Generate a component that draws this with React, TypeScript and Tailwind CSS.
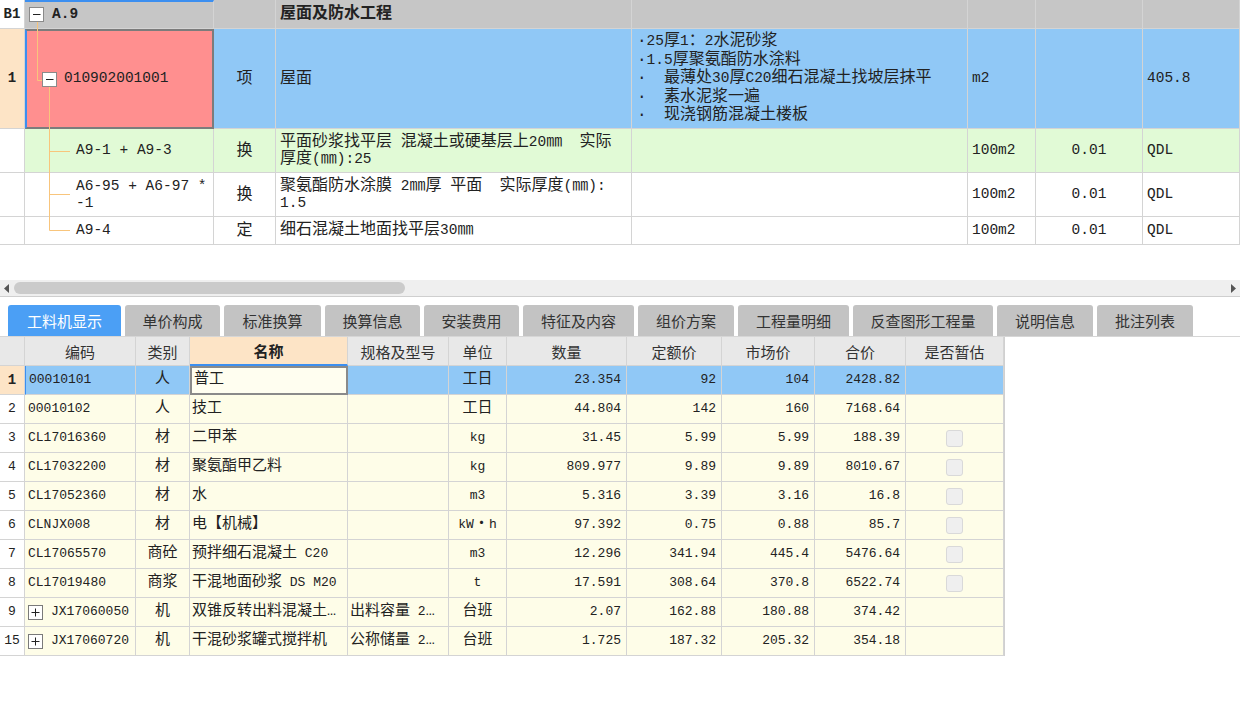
import React from "react";

// splits text so that ASCII runs can get their own (narrower) size
function Mix({ t, a }: { t: string; a: string }) {
  const parts = t.match(/[\x20-\x7e]+|[^\x20-\x7e]+/g) ?? [];
  return (
    <>
      {parts.map((p, i) =>
        /^[\x20-\x7e]/.test(p) ? (
          <span key={i} className={a}>
            {p}
          </span>
        ) : (
          <span key={i}>{p}</span>
        )
      )}
    </>
  );
}

const line = "shrink-0 border-r border-b border-[#d4d4d4] flex items-center";
const T = "text-[14.5px]";
const S = "text-[13px]";

const TreeLines = () => (
  <svg
    className="absolute left-0 top-0 pointer-events-none"
    width="214"
    height="245"
    viewBox="0 0 214 245"
  >
    <g stroke="#f8c57c" strokeWidth="1" fill="none">
      <path d="M37.5 22 V80.5 H42" />
      <path d="M49.5 87 V230.5 H70" />
      <path d="M49.5 151.5 H70" />
      <path d="M49.5 194.5 H70" />
    </g>
    <rect x="29.5" y="7.5" width="14" height="14" fill="#fff" stroke="#8a8a8a" />
    <path d="M33 14.5 H40.5" stroke="#222" />
    <rect x="42.5" y="72.5" width="14" height="14" fill="#fff" stroke="#8a8a8a" />
    <path d="M46 79.5 H53.5" stroke="#222" />
  </svg>
);

const tabs = [
  { name: "工料机显示", w: "w-[113px]" },
  { name: "单价构成", w: "w-[95px]" },
  { name: "标准换算", w: "w-[97px]" },
  { name: "换算信息", w: "w-[95px]" },
  { name: "安装费用", w: "w-[95px]" },
  { name: "特征及内容", w: "w-[111px]" },
  { name: "组价方案", w: "w-[96px]" },
  { name: "工程量明细", w: "w-[111px]" },
  { name: "反查图形工程量", w: "w-[140px]" },
  { name: "说明信息", w: "w-[96px]" },
  { name: "批注列表", w: "w-[96px]" },
];

interface Res {
  n: string;
  code: string;
  type: string;
  name: string;
  spec?: string;
  unit: string;
  qty: string;
  p1: string;
  p2: string;
  total: string;
  cb?: boolean;
  plus?: boolean;
}

const rows: Res[] = [
  { n: "1", code: "00010101", type: "人", name: "普工", unit: "工日", qty: "23.354", p1: "92", p2: "104", total: "2428.82" },
  { n: "2", code: "00010102", type: "人", name: "技工", unit: "工日", qty: "44.804", p1: "142", p2: "160", total: "7168.64" },
  { n: "3", code: "CL17016360", type: "材", name: "二甲苯", unit: "kg", qty: "31.45", p1: "5.99", p2: "5.99", total: "188.39", cb: true },
  { n: "4", code: "CL17032200", type: "材", name: "聚氨酯甲乙料", unit: "kg", qty: "809.977", p1: "9.89", p2: "9.89", total: "8010.67", cb: true },
  { n: "5", code: "CL17052360", type: "材", name: "水", unit: "m3", qty: "5.316", p1: "3.39", p2: "3.16", total: "16.8", cb: true },
  { n: "6", code: "CLNJX008", type: "材", name: "电【机械】", unit: "kW・h", qty: "97.392", p1: "0.75", p2: "0.88", total: "85.7", cb: true },
  { n: "7", code: "CL17065570", type: "商砼", name: "预拌细石混凝土 C20", unit: "m3", qty: "12.296", p1: "341.94", p2: "445.4", total: "5476.64", cb: true },
  { n: "8", code: "CL17019480", type: "商浆", name: "干混地面砂浆 DS M20", unit: "t", qty: "17.591", p1: "308.64", p2: "370.8", total: "6522.74", cb: true },
  { n: "9", code: "JX17060050", type: "机", name: "双锥反转出料混凝土…", spec: "出料容量 2…", unit: "台班", qty: "2.07", p1: "162.88", p2: "180.88", total: "374.42", plus: true },
  { n: "15", code: "JX17060720", type: "机", name: "干混砂浆罐式搅拌机", spec: "公称储量 2…", unit: "台班", qty: "1.725", p1: "187.32", p2: "205.32", total: "354.18", plus: true },
];

const PlusBox = () => (
  <span className="w-[15px] h-[15px] shrink-0 border border-[#7a7a7a] bg-white flex items-center justify-center">
    <svg width="9" height="9" viewBox="0 0 9 9">
      <path d="M0.5 4.5 H8.5 M4.5 0.5 V8.5" stroke="#222" strokeWidth="1" />
    </svg>
  </span>
);

function SubRow({
  h,
  bg,
  code,
  kind,
  name,
}: {
  h: string;
  bg: string;
  code: React.ReactNode;
  kind: string;
  name: React.ReactNode;
}) {
  return (
    <div className={`flex ${h}`}>
      <div className={`${line} w-[25px] bg-white`} />
      <div className={`${line} w-[189px] ${bg} pl-[51px] leading-[17px] ${T}`}>{code}</div>
      <div className={`${line} w-[62px] ${bg} justify-center`}>{kind}</div>
      <div className={`${line} w-[356px] ${bg} pl-[4px] leading-[17px] whitespace-pre`}>
        <div>{name}</div>
      </div>
      <div className={`${line} w-[336px] ${bg}`} />
      <div className={`${line} w-[68px] ${bg} pl-[4px] ${T}`}>100m2</div>
      <div className={`${line} w-[107px] ${bg} justify-center ${T}`}>0.01</div>
      <div className={`${line} w-[97px] ${bg} pl-[4px] ${T}`}>QDL</div>
    </div>
  );
}

export default function App() {
  const features = [
    "·25厚1：2水泥砂浆",
    "·1.5厚聚氨酯防水涂料",
    "·  最薄处30厚C20细石混凝土找坡层抹平",
    "·  素水泥浆一遍",
    "·  现浇钢筋混凝土楼板",
  ];

  return (
    <div className="w-[1240px] h-[704px] bg-white overflow-hidden text-[#222] font-['Liberation_Mono','Noto_Sans_CJK_SC',monospace]">
      {/* upper grid */}
      <div className="relative text-[16px]">
        <div className="flex h-[29px] bg-[#c6c6c6]">
          <div className={`${line} w-[25px] bg-white justify-center font-bold text-[14px]`}>B1</div>
          <div className={`${line} w-[189px] border-t-2 border-t-[#3c8ff0] pl-[27px] font-bold ${T}`}>A.9</div>
          <div className={`${line} w-[62px]`} />
          <div className={`${line} w-[356px] pl-[4px] font-bold`}>屋面及防水工程</div>
          <div className={`${line} w-[336px]`} />
          <div className={`${line} w-[68px]`} />
          <div className={`${line} w-[107px]`} />
          <div className={`${line} w-[97px]`} />
        </div>

        <div className="flex h-[100px] bg-[#90c8f6]">
          <div className={`${line} w-[25px] bg-[#fde4c6] justify-center font-bold text-[14px]`}>1</div>
          <div className="shrink-0 w-[189px] border-2 border-[#7c7c7c] border-l-[#3c8ff0] bg-[#ff8f8f] flex items-center pl-[37px]">
            <span className={T}>010902001001</span>
          </div>
          <div className={`${line} w-[62px] justify-center`}>项</div>
          <div className={`${line} w-[356px] pl-[4px]`}>屋面</div>
          <div className={`${line} w-[336px] pl-[5px]`}>
            <div className="leading-[18.5px] whitespace-pre">
              {features.map((f) => (
                <div key={f}>
                  <Mix t={f} a={T} />
                </div>
              ))}
            </div>
          </div>
          <div className={`${line} w-[68px] pl-[4px] ${T}`}>m2</div>
          <div className={`${line} w-[107px]`} />
          <div className={`${line} w-[97px] pl-[4px] ${T}`}>405.8</div>
        </div>

        <SubRow
          h="h-[44px]"
          bg="bg-[#e1fad6]"
          code="A9-1 + A9-3"
          kind="换"
          name={
            <>
              <Mix t="平面砂浆找平层 混凝土或硬基层上20㎜  实际" a={T} />
              <br />
              <Mix t="厚度(㎜):25" a={T} />
            </>
          }
        />
        <SubRow
          h="h-[44px]"
          bg="bg-white"
          code={
            <div>
              A6-95 + A6-97 *
              <br />
              -1
            </div>
          }
          kind="换"
          name={
            <>
              <Mix t="聚氨酯防水涂膜 2㎜厚 平面  实际厚度(㎜):" a={T} />
              <br />
              <span className={T}>1.5</span>
            </>
          }
        />
        <SubRow
          h="h-[28px]"
          bg="bg-white"
          code="A9-4"
          kind="定"
          name={<Mix t="细石混凝土地面找平层30㎜" a={T} />}
        />

        <TreeLines />
      </div>

      {/* horizontal scroll bar */}
      <div className="mt-[35px] h-[17px] bg-[#efefef] border-b border-[#cfcfcf] flex items-center">
        <svg className="ml-[4px]" width="5" height="9" viewBox="0 0 5 9">
          <path d="M5 0 L0 4.5 L5 9 Z" fill="#555" />
        </svg>
        <div className="ml-[5px] w-[391px] h-[12px] rounded-full bg-[#cbcbcb]" />
        <div className="flex-1" />
        <svg className="mr-[4px]" width="5" height="9" viewBox="0 0 5 9">
          <path d="M0 0 L5 4.5 L0 9 Z" fill="#555" />
        </svg>
      </div>

      {/* tabs */}
      <div className="h-[40px] pt-[8px] pl-[8px] flex gap-[4px] border-b border-[#d6d6d6] font-['Noto_Sans_CJK_SC',sans-serif] text-[15px]">
        {tabs.map((t, i) => (
          <div
            key={t.name}
            className={`${t.w} h-[31px] shrink-0 rounded-t-[3px] flex items-center justify-center leading-none ${
              i === 0 ? "bg-[#4b9ff5] text-white" : "bg-[#c3c3c3] text-[#333]"
            }`}
          >
            {t.name}
          </div>
        ))}
      </div>

      {/* resource grid */}
      <div className="w-[1005px] border-r border-[#d0d0d0] text-[15px]">
        <div className="flex h-[29px] bg-[#e8e8e8] text-[#333] font-['Noto_Sans_CJK_SC',sans-serif] leading-none">
          <div className={`${line} w-[25px]`} />
          <div className={`${line} w-[111px] justify-center`}>编码</div>
          <div className={`${line} w-[54px] justify-center`}>类别</div>
          <div className={`${line} w-[158px] justify-center bg-[#fde4c6] font-bold text-[#222] border-b-2 border-b-[#3c8ff0]`}>名称</div>
          <div className={`${line} w-[101px] justify-center`}>规格及型号</div>
          <div className={`${line} w-[58px] justify-center`}>单位</div>
          <div className={`${line} w-[120px] justify-center`}>数量</div>
          <div className={`${line} w-[95px] justify-center`}>定额价</div>
          <div className={`${line} w-[93px] justify-center`}>市场价</div>
          <div className={`${line} w-[91px] justify-center`}>合价</div>
          <div className={`${line} w-[98px] justify-center`}>是否暂估</div>
        </div>

        {rows.map((r, i) => {
          const sel = i === 0;
          const bg = sel ? "bg-[#90c8f6]" : "bg-[#fefde8]";
          return (
            <div key={r.n} className={`flex h-[29px] ${bg}`}>
              <div
                className={`${line} w-[25px] justify-center ${
                  sel ? "bg-[#fde4c6] font-bold text-[14px]" : "bg-white text-[13px]"
                }`}
              >
                {r.n}
              </div>
              <div className={`${line} w-[111px] pl-[3px] gap-[8px] ${S} ${sel ? "border-l border-l-[#3c8ff0]" : ""}`}>
                {r.plus && <PlusBox />}
                {r.code}
              </div>
              <div className={`${line} w-[54px] justify-center`}>{r.type}</div>
              {sel ? (
                <div className="shrink-0 w-[158px] border-2 border-[#8a8a8a] bg-[#fffef0] flex items-center pl-[2px]">
                  {r.name}
                </div>
              ) : (
                <div className={`${line} w-[158px] pl-[2px] whitespace-pre overflow-hidden`}>
                  <Mix t={r.name} a={S} />
                </div>
              )}
              <div className={`${line} w-[101px] pl-[2px] whitespace-pre overflow-hidden`}>
                {r.spec && <Mix t={r.spec} a={S} />}
              </div>
              <div className={`${line} w-[58px] justify-center`}>
                <Mix t={r.unit} a={S} />
              </div>
              <div className={`${line} w-[120px] justify-end pr-[5px] ${S}`}>{r.qty}</div>
              <div className={`${line} w-[95px] justify-end pr-[5px] ${S}`}>{r.p1}</div>
              <div className={`${line} w-[93px] justify-end pr-[5px] ${S}`}>{r.p2}</div>
              <div className={`${line} w-[91px] justify-end pr-[5px] ${S}`}>{r.total}</div>
              <div className={`${line} w-[98px] justify-center`}>
                {r.cb && (
                  <span className="w-[17px] h-[17px] rounded-[3px] border border-[#d9d9d9] bg-[#efefef]" />
                )}
              </div>
            </div>
          );
        })}
      </div>
    </div>
  );
}
